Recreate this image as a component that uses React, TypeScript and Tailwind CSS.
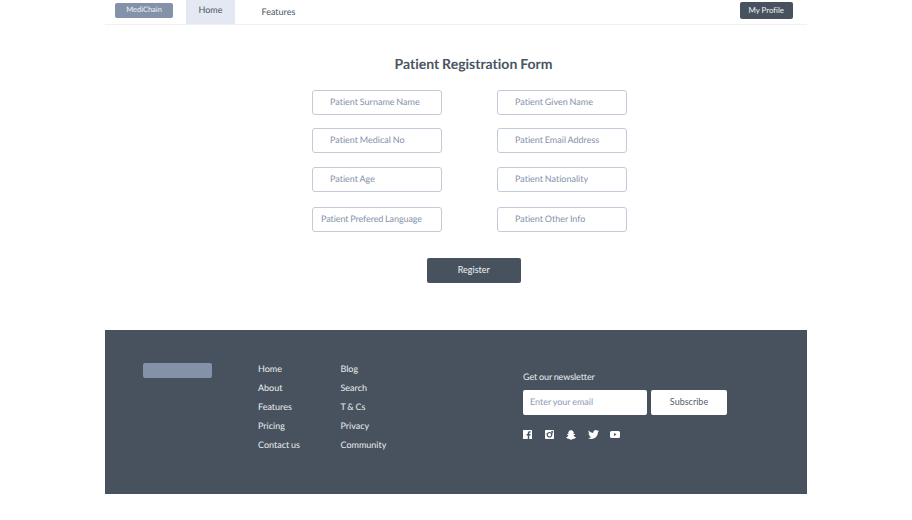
import { FaSnapchatGhost, FaTwitter } from "react-icons/fa";

type FieldProps = { label: string; className?: string };

function Field({ label, className = "pl-[17px]" }: FieldProps) {
  return (
    <label
      className={`flex h-[25px] w-[130px] items-center rounded-[3px] border border-[#c3cad9] bg-white pb-px text-[#8492ab] ${className}`}
    >
      {label}
    </label>
  );
}

function FacebookIcon() {
  return (
    <svg viewBox="0 0 18 18" className="size-[9px]" fill="#fff">
      <path d="M1 0h16a1 1 0 0 1 1 1v16a1 1 0 0 1-1 1h-4.600v-7h2.400l.4-2.800h-2.800V6.500c0-.9.3-1.400 1.500-1.400h1.400V2.600c-.4 0-1.200-.1-2.100-.1-2.200 0-3.600 1.300-3.600 3.700v2H7.200V11h2.400v7H1a1 1 0 0 1-1-1V1a1 1 0 0 1 1-1Z" />
    </svg>
  );
}

function InstagramIcon() {
  return (
    <svg viewBox="0 0 18 18" className="size-[9px]">
      <rect width="18" height="18" rx="1.500" fill="#fff" />
      <path d="M2 7.500h3M13 7.500h3M13 2.500h3v2.500h-3Z" stroke="#48525e" strokeWidth="1" fill="#48525e" />
      <circle cx="9" cy="9.500" r="4.500" fill="none" stroke="#48525e" strokeWidth="2.400" />
    </svg>
  );
}

function YoutubeIcon() {
  return (
    <svg viewBox="0 0 20 14" className="h-[7px] w-[10px]">
      <path
        fill="#fff"
        fillRule="evenodd"
        d="M3 0h14a3 3 0 0 1 3 3v8a3 3 0 0 1-3 3H3a3 3 0 0 1-3-3V3a3 3 0 0 1 3-3ZM8 4v6l5-3Z"
      />
    </svg>
  );
}

function LinkColumn({ links, className }: { links: string[]; className: string }) {
  return (
    <ul className={`mt-[29px] shrink-0 ${className}`}>
      {links.map((link) => (
        <li key={link} className="h-[19px] leading-[19px]">
          {link}
        </li>
      ))}
    </ul>
  );
}

export default function App() {
  return (
    <div className="h-[520px] overflow-hidden bg-white font-['Lato',sans-serif] text-[9px] leading-[12px] whitespace-nowrap text-[#4a5562] [font-variant-ligatures:none] [text-rendering:geometricPrecision] [word-spacing:-0.500px]">
      <div className="ml-[105px] w-[702px]">
        <header className="flex h-[25px] items-start border-b border-[#edf0f7]">
          <div className="mt-[3px] ml-[10px] flex h-[14.500px] w-[58px] items-center justify-center rounded-[2px] bg-[#8492a9] text-[7.500px] text-[#f1f4f8]">
            MediChain
          </div>
          <nav className="flex">
            <a className="ml-[13px] flex h-[24px] w-[49px] justify-center bg-[#e4e8f2] pt-[4px]">Home</a>
            <a className="ml-[26.500px] pt-[5.500px]">Features</a>
          </nav>
          <button className="mt-[1.500px] mr-[14.500px] ml-auto flex h-[17px] w-[52.500px] items-center justify-center rounded-[2px] bg-[#48525e] text-[7.900px] text-[#f1f4f8]">
            My Profile
          </button>
        </header>

        <main className="h-[305px] pt-[29px]">
          <h1 className="ml-[35px] text-center text-[14px] leading-[20px] font-bold">Patient Registration Form</h1>
          <form className="mt-[16px] ml-[207px]">
            <div className="flex gap-[55px]">
              <Field label="Patient Surname Name" />
              <Field label="Patient Given Name" />
            </div>
            <div className="mt-[13px] flex gap-[55px]">
              <Field label="Patient Medical No" />
              <Field label="Patient Email Address" />
            </div>
            <div className="mt-[14px] flex gap-[55px]">
              <Field label="Patient Age" />
              <Field label="Patient Nationality" />
            </div>
            <div className="mt-[15px] flex gap-[55px]">
              <Field label="Patient Prefered Language" className="pl-[8px] tracking-[-0.080px]" />
              <Field label="Patient Other Info" />
            </div>
            <button
              type="button"
              className="mt-[26px] ml-[115px] flex h-[25px] w-[93.500px] items-center justify-center rounded-[2px] bg-[#48525e] pb-px text-[#f1f4f8]"
            >
              Register
            </button>
          </form>
        </main>

        <footer className="flex h-[164px] bg-[#48525e] text-[#e9ecf0]">
          <div className="mt-[33px] ml-[38px] h-[15px] w-[69px] shrink-0 rounded-[2px] bg-[#8492a9]" />
          <LinkColumn className="ml-[46px] w-[82.500px]" links={["Home", "About", "Features", "Pricing", "Contact us"]} />
          <LinkColumn className="w-[181.500px]" links={["Blog", "Search", "T & Cs", "Privacy", "Community"]} />
          <section className="mt-[41px] ml-px">
            <p className="tracking-[-0.080px]">Get our newsletter</p>
            <div className="mt-[7px] flex gap-[4px]">
              <div className="flex h-[25px] w-[124px] items-center rounded-[2px] bg-white pb-px pl-[7px] text-[#8c98b0]">
                Enter your email
              </div>
              <button className="flex h-[25px] w-[76px] items-center justify-center rounded-[2px] bg-white pb-px text-[#555f6b]">
                Subscribe
              </button>
            </div>
            <div className="mt-[14px] flex h-[11px] items-center">
              <FacebookIcon />
              <span className="ml-[13px]"><InstagramIcon /></span>
              <FaSnapchatGhost className="ml-[12px] size-[10px] text-white" />
              <FaTwitter className="ml-[12px] size-[11px] text-white" />
              <span className="ml-[11px]"><YoutubeIcon /></span>
            </div>
          </section>
        </footer>
      </div>
    </div>
  );
}
